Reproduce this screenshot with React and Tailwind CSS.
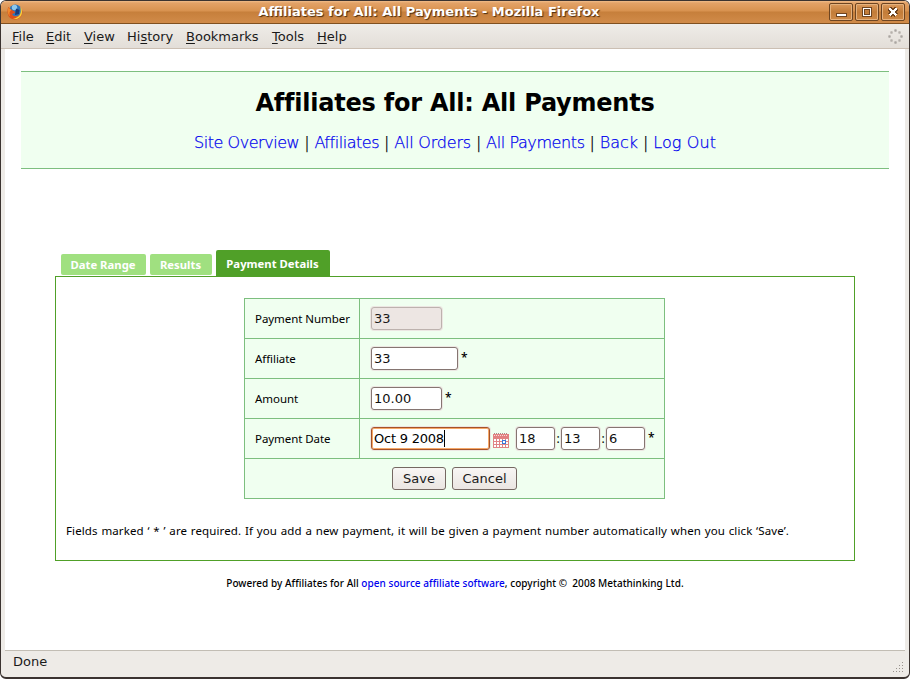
import React from "react";

const menus = [
  ["F", "ile", "", "w-[34px]"],
  ["E", "dit", "", "w-[38px]"],
  ["V", "iew", "", "w-[43px]"],
  ["s", "tory", "Hi", "w-[59px]"],
  ["B", "ookmarks", "", "w-[86px]"],
  ["T", "ools", "", "w-[45px]"],
  ["H", "elp", "", "w-[40px]"],
];

const links = [
  ["Site Overview", "tracking-[-0.45px]"],
  ["Affiliates", "tracking-[-0.45px]"],
  ["All Orders", "tracking-[-0.2px]"],
  ["All Payments", "tracking-[-0.4px]"],
  ["Back", ""],
  ["Log Out", "tracking-[0.1px]"],
];

function FirefoxIcon() {
  return (
    <svg width="16" height="16" viewBox="0 0 16 16">
      <circle cx="8.300" cy="6.500" r="6" fill="#2f74b8" />
      <circle cx="7.500" cy="3.500" r="2.700" fill="#8cc8ee" />
      <path d="M9 4.500l3.500 1.500-.5 4-4 1z" fill="#1b3a78" />
      <path d="M1.300 3C-.6 8 .8 15.400 8 15.500c5 0 8-4.500 7.300-9.500-.8 4-2.800 6.500-6 6.500-2.300 0-3.800-1-4.100-2.500L8 9 7.800 7.500 6 6.500 3.500 5.500 2.500 4z" fill="#dd4f1a" />
      <path d="M1.300 3.500C.2 8 1 11 3 12.500 2 9 2.500 7 4.500 6L2.500 4.500z" fill="#f08a2c" />
      <path d="M13.500 3c2.600 4 2 9.500-2.500 11.500-1.500.7-3.500.8-5 .2C11 14 13.800 11 13.700 7z" fill="#f9cf38" />
    </svg>
  );
}

function WindowButton({ children }) {
  return (
    <div className="h-[18px] w-6 rounded-[2px] border border-[#6e4521] bg-linear-to-b from-[#dc9a5c] via-[#c27c38] to-[#cf8a47] shadow-[inset_0_0_0_1px_#e5b27e]">
      <svg width="22" height="16" viewBox="0 0 22 16" shapeRendering="crispEdges">{children}</svg>
    </div>
  );
}

function Throbber() {
  const dots = [[7, 1], [11, 3], [13, 7], [11, 11], [7, 13], [3, 11], [1, 7], [3, 3]];
  return (
    <svg width="15" height="15" viewBox="0 0 15 15">
      {dots.map(([x, y], i) => (
        <rect key={i} x={x - 0.7} y={y - 0.7} width="2.400" height="2.400" rx="0.600" fill={i % 2 ? "#b5b0ab" : "#aaa5a1"} />
      ))}
    </svg>
  );
}

function Calendar() {
  return (
    <svg width="16" height="15" viewBox="0 0 16 15" shapeRendering="crispEdges">
      <rect x="0" y="1" width="16" height="4" fill="#e28080" />
      <path d="M1 .5h1M3 .5h1M5 .5h1M7 .5h1M9 .5h1M11 .5h1M13 .5h1" stroke="#a88" />
      <path d="M1 2.500h1M3 2.500h1M5 2.500h1M7 2.500h1M9 2.500h1M11 2.500h1M13 2.500h1" stroke="#f6dada" />
      <rect x="1" y="5" width="14" height="9" fill="#fff" />
      <path d="M.5 4v10.500M3.500 4v10M6.500 4v10M9.500 4v10M12.500 4v10M15.500 4v10.500M0 5.500h16M0 8.500h16M0 11.500h16M0 14.500h16" stroke="#e08484" />
      <rect x="9.500" y="7.500" width="3" height="3" fill="#fff" stroke="#3c78d8" />
    </svg>
  );
}

function Field({ value, className = "", disabled }) {
  return (
    <div className={`flex h-[23px] items-center rounded-[3px] border pl-[2px] text-[13px] leading-[21px] shadow-[0_0_0_1px_#ece6e2] ${disabled ? "border-[#bdb2ae] bg-[#ede6e3] text-[#1a1a1a]" : "border-[#857571] bg-white text-[#101010]"} ${className}`}>
      {value}
    </div>
  );
}

function Star() {
  return <span className="mb-px ml-[3px] font-['Open_Sans',sans-serif] text-[12px] leading-[20px] font-semibold">*</span>;
}

function Row({ label, children }) {
  return (
    <div className="flex h-10 border-b border-[#7dbf7f]">
      <div className="flex w-[115px] shrink-0 items-center border-r border-[#7dbf7f] pt-px pl-[10px] font-['Noto_Sans',sans-serif] text-[11.5px] tracking-[-0.06px] whitespace-nowrap">{label}</div>
      <div className="flex items-center pl-[11px]">{children}</div>
    </div>
  );
}

export default function App() {
  return (
    <div className="h-[679px] w-[910px] bg-white font-['DejaVu_Sans',sans-serif] text-black">
      <div className="flex h-full flex-col overflow-hidden rounded-[6px] border border-b-2 border-[#3b3330] bg-[#eeebe7]">
        <div className="flex h-[23px] shrink-0 items-center border-b border-[#805020] bg-[linear-gradient(#f0bd8a_0px,#e3a267_2px,#d8924f_10px,#c67f3b_11px,#d08a48_21px)] pr-1 pl-[6px]">
          <FirefoxIcon />
          <div className="flex-1 pl-[4px] text-center text-[13px] leading-[20px] font-bold whitespace-nowrap text-white [text-shadow:1px_1px_1px_#4a2c10]">
            <span className="ml-[2px]">Affiliates for All: All Payments - Mozilla Firefox</span>
          </div>
          <div className="flex gap-[2px]">
            <WindowButton><rect x="6.500" y="9.500" width="10" height="3" fill="#fff" stroke="#6e4521" /></WindowButton>
            <WindowButton>
              <rect x="6.500" y="3.500" width="9" height="9" fill="none" stroke="#6e4521" />
              <rect x="7.500" y="4.500" width="7" height="7" fill="none" stroke="#fff" />
              <rect x="8.500" y="5.500" width="5" height="5" fill="none" stroke="#6e4521" />
            </WindowButton>
            <WindowButton><path d="M7.500 4.500l7 7M14.500 4.500l-7 7" stroke="#6e4521" strokeWidth="4.500" /><path d="M7.500 4.500l7 7M14.500 4.500l-7 7" stroke="#fff" strokeWidth="2.500" /></WindowButton>
          </div>
        </div>

        <div className="flex h-[25px] shrink-0 items-center justify-between border-b border-[#cbbfb3] bg-linear-to-b from-[#efece8] to-[#e3ded8] pr-[6px] pl-[11px]">
          <div className="flex pt-px text-[13px] text-[#1a1a1a]">
            {menus.map(([key, rest, before, w]) => (
              <div key={key} className={`shrink-0 whitespace-nowrap ${w}`}>{before}<span className="underline underline-offset-2">{key}</span>{rest}</div>
            ))}
          </div>
          <Throbber />
        </div>

        <div className="mr-1 ml-1 h-[601px] shrink-0 bg-white px-4 pt-[22px]">
          <div className="h-[98px] border-y border-[#7dbf7f] bg-[#f0fff0] pt-[16px] text-center">
            <h1 className="text-[24px] leading-[30px] font-bold tracking-[-0.23px]">Affiliates for All: All Payments</h1>
            <div className="mt-[15px] text-[16px] leading-[20px] font-extralight whitespace-nowrap [-webkit-text-stroke:0.25px]">
              {links.map(([l, t], i) => (
                <span key={l}>{i > 0 && <span className="tracking-[-0.15px]">{" | "}</span>}<a className={`text-[#0000ee] ${t}`}>{l}</a></span>
              ))}
            </div>
          </div>

          <div className="mx-[34px] mt-[81px]">
            <div className="flex h-[26px] items-end gap-1 pl-[6px] font-['Noto_Sans',sans-serif] text-[11.3px] font-bold whitespace-nowrap text-white">
              <div className="mb-px flex h-[21px] w-[85px] items-center justify-center rounded-[2px] bg-[#a0e080] pt-[2px] pr-px">Date Range</div>
              <div className="mb-px flex h-[21px] w-[62px] items-center justify-center rounded-[2px] bg-[#a0e080] pt-[2px] pr-px">Results</div>
              <div className="flex h-[26px] w-[114px] items-center justify-center rounded-t-[2px] bg-[#50a028] pt-[2px] pr-px">Payment Details</div>
            </div>
            <div className="h-[285px] w-[800px] border border-[#50a028] pt-[21px]">
              <div className="ml-[188px] w-[421px] border border-b-0 border-[#7dbf7f] bg-[#f0fff0]">
                <Row label="Payment Number"><Field value="33" disabled className="w-[71px]" /></Row>
                <Row label="Affiliate"><Field value="33" className="w-[87px]" /><Star /></Row>
                <Row label="Amount"><Field value="10.00" className="w-[71px]" /><Star /></Row>
                <Row label="Payment Date">
                  <div className="flex h-[23px] w-[119px] items-center rounded-[3px] border border-[#a5532a] bg-white pl-[2px] text-[13px] shadow-[inset_0_0_0_1px_#f5a868,0_0_0_1px_#ece6e2]">
                    <span className="border-r border-black leading-[17px] tracking-[-0.22px]">Oct 9 2008</span>
                  </div>
                  <div className="mt-[3px] mr-[7px] ml-[3px]"><Calendar /></div>
                  <Field value="18" className="w-[39px]" />
                  <span className="w-[6px] text-center font-['Noto_Sans',sans-serif] text-[12px]">:</span>
                  <Field value="13" className="w-[39px]" />
                  <span className="w-[6px] text-center font-['Noto_Sans',sans-serif] text-[12px]">:</span>
                  <Field value="6" className="w-[39px]" />
                  <Star />
                </Row>
                <div className="flex h-10 items-center justify-center gap-[6px] border-b border-[#7dbf7f] text-[13px] text-[#1a1a1a]">
                  <div className="flex h-[23px] w-[54px] items-center justify-center rounded-[3px] border border-[#756862] bg-linear-to-b from-[#f8f6f4] via-[#f1eeeb] via-50% to-[#ebe6e2]">Save</div>
                  <div className="flex h-[23px] w-[65px] items-center justify-center rounded-[3px] border border-[#756862] bg-linear-to-b from-[#f8f6f4] via-[#f1eeeb] via-50% to-[#ebe6e2]">Cancel</div>
                </div>
              </div>
              <p className="mt-[23px] ml-[10px] font-['Noto_Sans',sans-serif] text-[11.5px] leading-[18px] tracking-[0.12px] whitespace-nowrap [word-spacing:0.6px]">Fields marked ‘ * ’ are required. If you add a new payment, it will be given a payment number automatically when you click ‘Save’.</p>
            </div>
          </div>
          <p className="mt-[14px] text-center font-['Noto_Sans',sans-serif] text-[10px] leading-[16px] font-medium tracking-[0.04px] whitespace-nowrap">
            Powered by Affiliates for All <a className="text-[#0000ee]">open source affiliate software</a>, copyright ©&nbsp; 2008 Metathinking Ltd.
          </p>
        </div>

        <div className="mr-1 ml-1 flex flex-1 items-start justify-between border-t border-[#c2bdb4] pt-[3px] pl-2 text-[13px] leading-[16px] text-[#1a1a1a]">
          <span>Done</span>
          <svg className="mt-[7px] mr-px" width="12" height="12" viewBox="0 0 12 12" shapeRendering="crispEdges">
            <path d="M10 1h1M7 4h1M10 4h1M4 7h1M7 7h1M10 7h1M1 10h1M4 10h1M7 10h1M10 10h1" stroke="#99938d" />
          </svg>
        </div>
      </div>
    </div>
  );
}
